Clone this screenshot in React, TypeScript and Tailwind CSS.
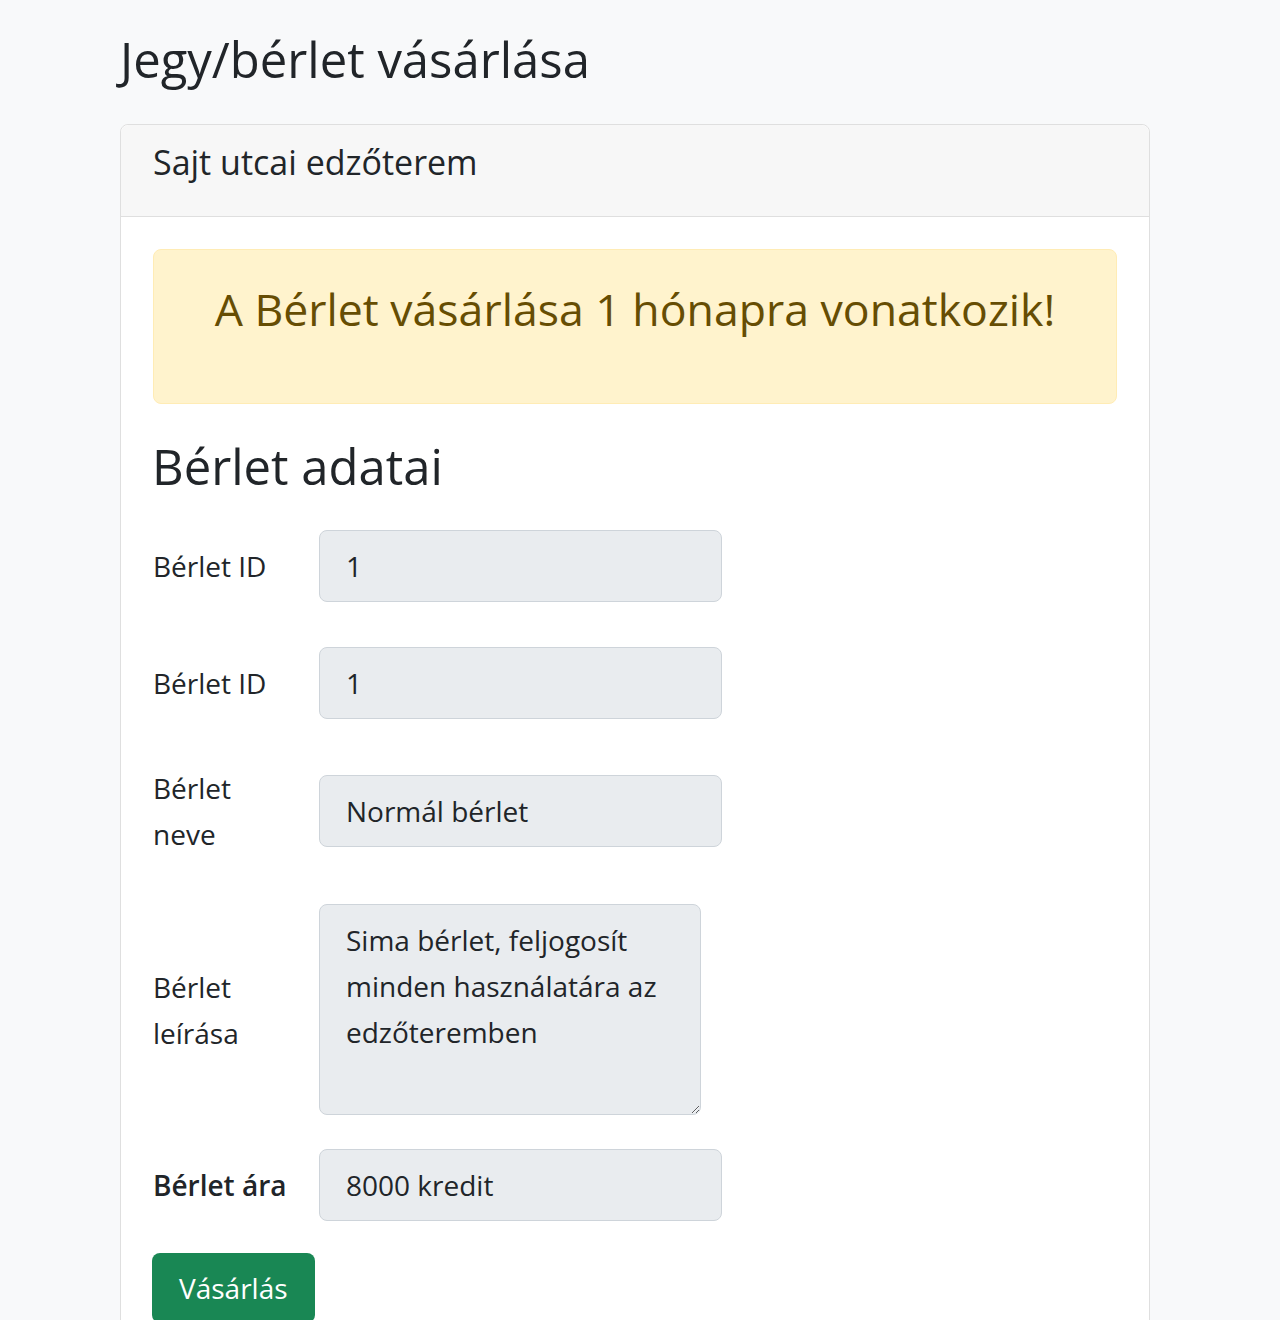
export default function App() {
  return (
    <div className="min-h-screen bg-[#f8f9fa] font-['Open_Sans',sans-serif] text-[#212529]">
      <div className="ml-[120px] w-[1030px] pt-[31px]">
        <h1 className="text-[49px] leading-[56px] font-normal">Jegy/bérlet vásárlása</h1>

        <div className="mt-[37px] rounded-[8px] border border-[#dfdfdf] bg-white">
          <div className="h-[92px] rounded-t-[8px] border-b border-[#dfdfdf] bg-[#f7f7f7] px-[32px] pt-[12px] text-[34px] leading-[50px]">
            Sajt utcai edzőterem
          </div>

          <div className="px-[32px] pt-[32px] pb-[40px]">
            <div className="h-[155px] rounded-[8px] border border-[#ffecb5] bg-[#fff3cd] pt-[31px] text-center text-[44.6px] leading-[56px] text-[#664d03]">
              A Bérlet vásárlása 1 hónapra vonatkozik!
            </div>

            <h2 className="mt-[33px] mb-[34px] -ml-[1px] text-[49px] leading-[58px] font-normal">Bérlet adatai</h2>

            <Row label={<>Bérlet ID</>} className="mb-[43px]">
              <Field value="1" />
            </Row>
            <Row label={<>Bérlet ID</>} className="mb-[31px]">
              <Field value="1" />
            </Row>
            <Row label={<>Bérlet<br />neve</>} className="mb-[33px]">
              <Field value="Normál bérlet" />
            </Row>
            <Row label={<>Bérlet<br />leírása</>} className="mb-[33px]">
              <textarea
                readOnly
                value="Sima bérlet, feljogosít minden használatára az edzőteremben"
                className="block h-[211px] w-[382px] resize-y rounded-[8px] border border-[#ced4da] bg-[#e9ecef] px-[26px] py-[12px] text-[28px] leading-[46px] text-[#212529] outline-none"
              />
            </Row>
            <Row label={<span className="font-semibold">Bérlet ára</span>} className="mb-[31px]">
              <Field value="8000 kredit" />
            </Row>

            <button className="-ml-[1px] rounded-[8px] bg-[#198754] px-[27px] py-[12px] text-[28px] leading-[46px] text-white">
              Vásárlás
            </button>
          </div>
        </div>
      </div>
    </div>
  )
}

function Row({
  label,
  className,
  children,
}: {
  label: React.ReactNode
  className?: string
  children: React.ReactNode
}) {
  return (
    <div className={`flex items-center ${className ?? ''}`}>
      <label className="w-[166px] shrink-0 py-[14px] text-[28px] leading-[46px]">{label}</label>
      <div>{children}</div>
    </div>
  )
}

function Field({ value }: { value: string }) {
  return (
    <input
      readOnly
      value={value}
      className="block h-[72px] w-[403px] rounded-[8px] border border-[#ced4da] bg-[#e9ecef] px-[26px] text-[28px] leading-[46px] text-[#212529] outline-none"
    />
  )
}
